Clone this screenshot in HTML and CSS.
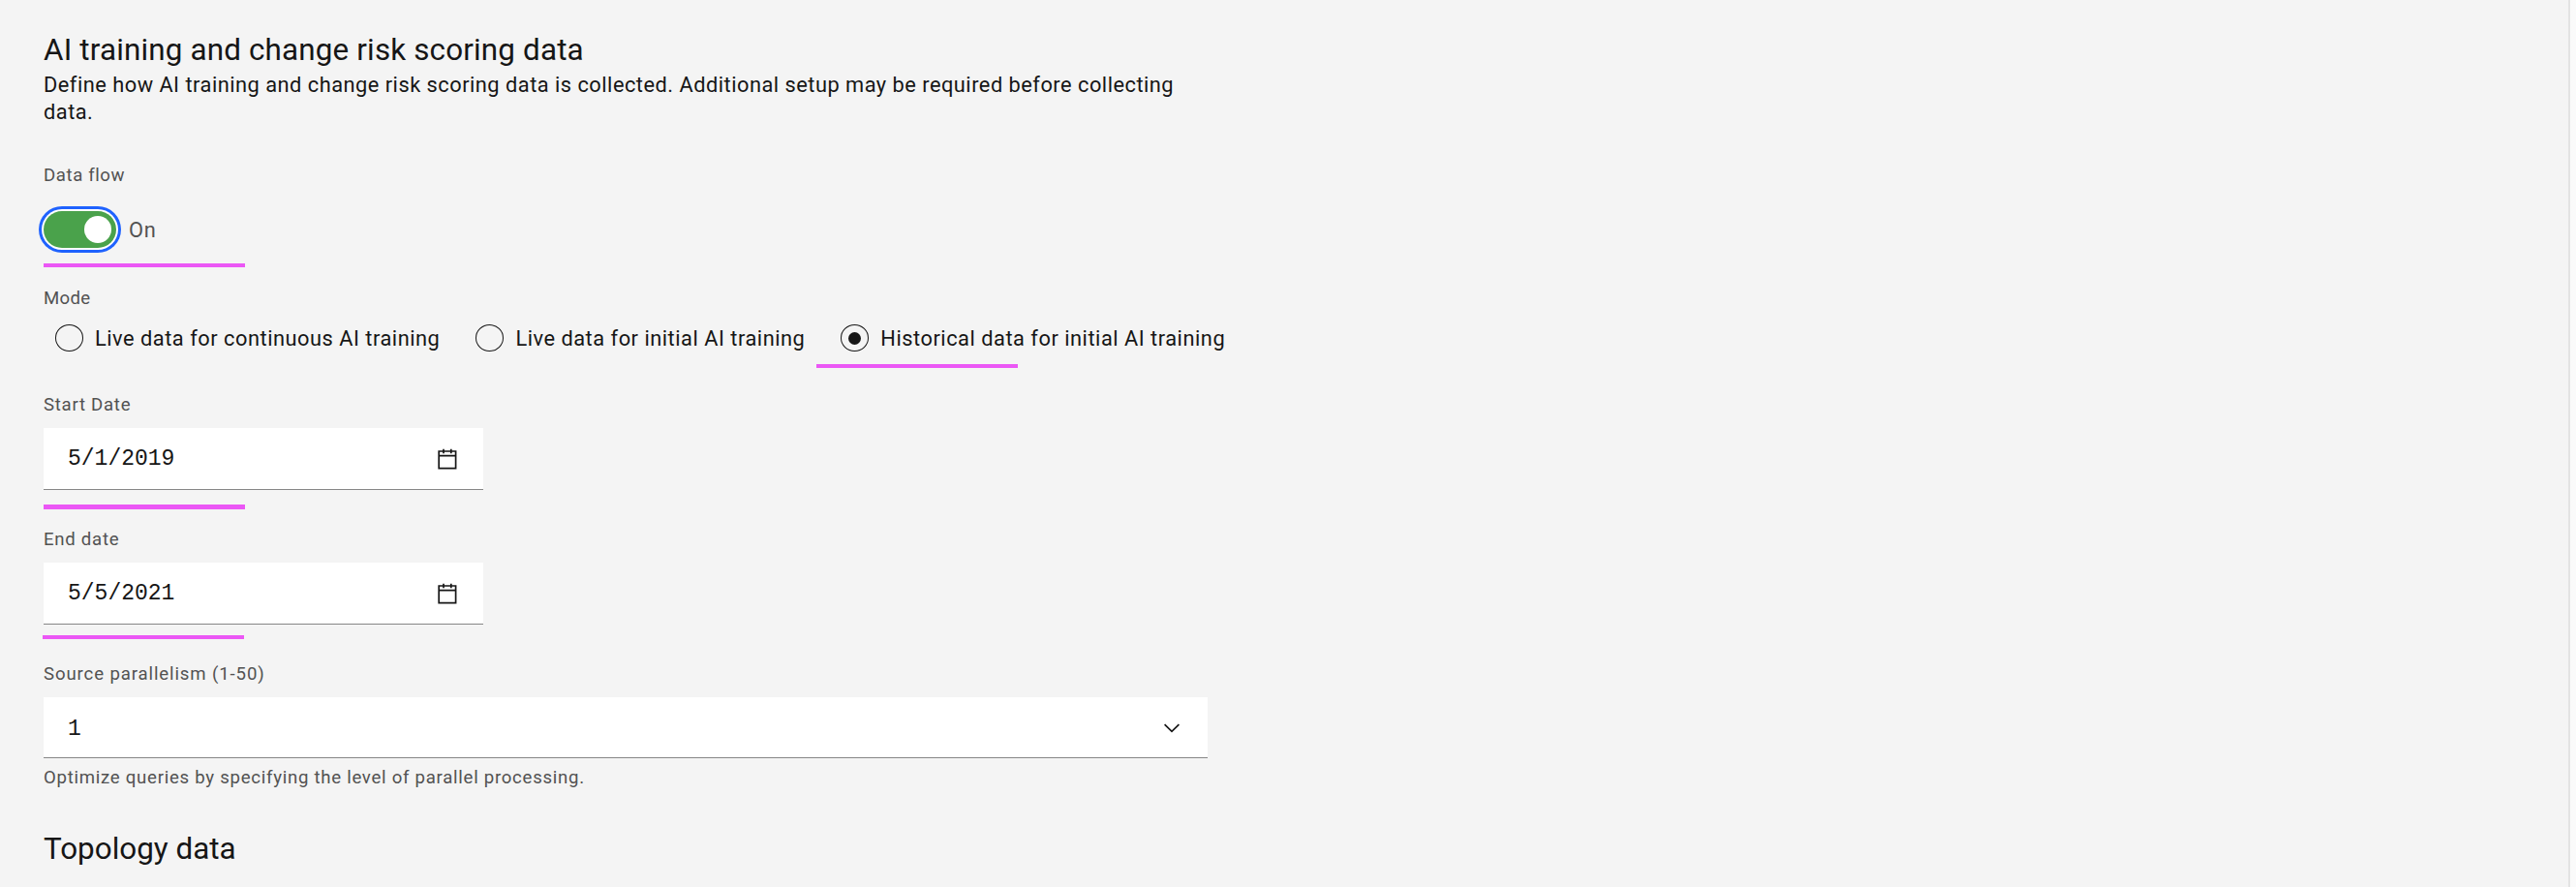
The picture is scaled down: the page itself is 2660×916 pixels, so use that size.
FILE: index.html
```
<!DOCTYPE html>
<html lang="en">
<head>
<meta charset="utf-8">
<title>AI training data</title>
<link rel="stylesheet" href="styles.css">
</head>
<body>
<main class="panel">
  <h2 class="title title-main">AI training and change risk scoring data</h2>
  <p class="description">Define how AI training and change risk scoring data is collected. Additional setup may be required before collecting<br>data.</p>

  <div class="label label-flow">Data flow</div>
  <div class="toggle-row">
    <div class="toggle"><div class="knob"></div></div>
    <span class="toggle-text">On</span>
  </div>
  <div class="mark mark-flow"></div>

  <div class="label label-mode">Mode</div>
  <div class="radios">
    <div class="radio"><i class="circle"></i><span>Live data for continuous AI training</span></div>
    <div class="radio"><i class="circle"></i><span>Live data for initial AI training</span></div>
    <div class="radio"><i class="circle checked"></i><span>Historical data for initial AI training</span><div class="mark mark-radio"></div></div>
  </div>

  <div class="label label-start">Start Date</div>
  <div class="input date">
    <span class="mono">5/1/2019</span>
    <svg class="calendar" viewBox="0 0 20 22"><path d="M1.2 3h17.4v17.6H1.2zM1.2 7.6h17.4M6 0.8v4.4M13.8 0.8v4.4"/></svg>
  </div>
  <div class="mark mark-start"></div>

  <div class="label label-end">End date</div>
  <div class="input date">
    <span class="mono">5/5/2021</span>
    <svg class="calendar" viewBox="0 0 20 22"><path d="M1.2 3h17.4v17.6H1.2zM1.2 7.6h17.4M6 0.8v4.4M13.8 0.8v4.4"/></svg>
  </div>
  <div class="mark mark-end"></div>

  <div class="label label-source">Source parallelism (1-50)</div>
  <div class="input select">
    <span class="mono">1</span>
    <svg class="chevron" viewBox="0 0 18 10"><path d="M1.6 1.2L9 8.4l7.4-7.2"/></svg>
  </div>
  <div class="helper">Optimize queries by specifying the level of parallel processing.</div>

  <h2 class="title title-topology">Topology data</h2>
</main>
<aside class="edge"></aside>
</body>
</html>
```
FILE: styles.css
```
* { box-sizing: border-box; }
body {
  margin: 0;
  height: 916px;
  display: flex;
  overflow: hidden;
  background: #f4f4f4;
  color: #161616;
  font-family: Roboto, "Liberation Sans", sans-serif;
}
.panel { flex: 1; padding: 32px 0 0 45px; }
.edge { width: 8px; border-left: 2px solid #e3e3e3; background: #fafafa; }
.title { margin: 0; font-size: 31.4px; line-height: 40px; font-weight: 400; letter-spacing: 0.16px; }
.description { margin: 2px 0 0; font-size: 21.8px; line-height: 28px; letter-spacing: 0.495px; white-space: nowrap; }
.label, .helper { font-size: 18.6px; line-height: 24px; letter-spacing: 0.73px; color: #525252; white-space: nowrap; }
.label-flow { margin-top: 39px; letter-spacing: 0.6px; }
.toggle-row { display: flex; align-items: center; height: 38px; margin-top: 25px; }
.toggle {
  display: flex;
  align-items: center;
  justify-content: flex-end;
  width: 75px;
  height: 38px;
  padding-right: 5px;
  border-radius: 19px;
  background: #4aa24b;
  box-shadow: 0 0 0 2px #fff, 0 0 0 5px #1f62fe;
}
.knob { width: 28px; height: 28px; border-radius: 50%; background: #fff; }
.toggle-text { margin-left: 13px; font-size: 21.8px; letter-spacing: 0.7px; color: #525252; }
.mark { width: 208px; height: 4px; background: #eb57f5; }
.mark-flow { margin-top: 16px; }
.label-mode { margin-top: 20px; letter-spacing: 0.3px; }
.radios { display: flex; height: 28px; margin: 15px 0 0 12px; gap: 37px; }
.radio { position: relative; display: flex; align-items: center; font-size: 21.8px; letter-spacing: 0.52px; white-space: nowrap; }
.circle {
  display: flex;
  align-items: center;
  justify-content: center;
  width: 29px;
  height: 28px;
  margin-right: 12px;
  border: 1px solid #161616;
  border-radius: 50%;
}
.checked::after { content: ""; width: 13px; height: 13px; border-radius: 50%; background: #161616; }
.mark-radio { position: absolute; left: -25px; top: 41px; }
.label-start { margin-top: 43px; }
.input {
  display: flex;
  align-items: center;
  justify-content: space-between;
  margin-top: 12px;
  padding-left: 25px;
  background: #fff;
  border-bottom: 1px solid #868686;
}
.date { width: 454px; height: 64px; padding-right: 27px; }
.mono { padding-top: 1px; font: 23px/28px "Liberation Mono", monospace; }
.calendar { width: 20px; height: 22px; fill: none; stroke: #161616; stroke-width: 1.7; }
.mark-start { height: 5px; margin-top: 15px; }
.label-end { margin-top: 19px; }
.mark-end { margin: 11px 0 0 -1px; }
.label-source { margin-top: 24px; letter-spacing: 0.88px; }
.select { width: 1202px; height: 63px; padding: 2px 28px 0 25px; }
.chevron { width: 18px; height: 10px; fill: none; stroke: #161616; stroke-width: 1.7; }
.helper { margin-top: 8px; }
.title-topology { margin-top: 42px; letter-spacing: 0; }
```
